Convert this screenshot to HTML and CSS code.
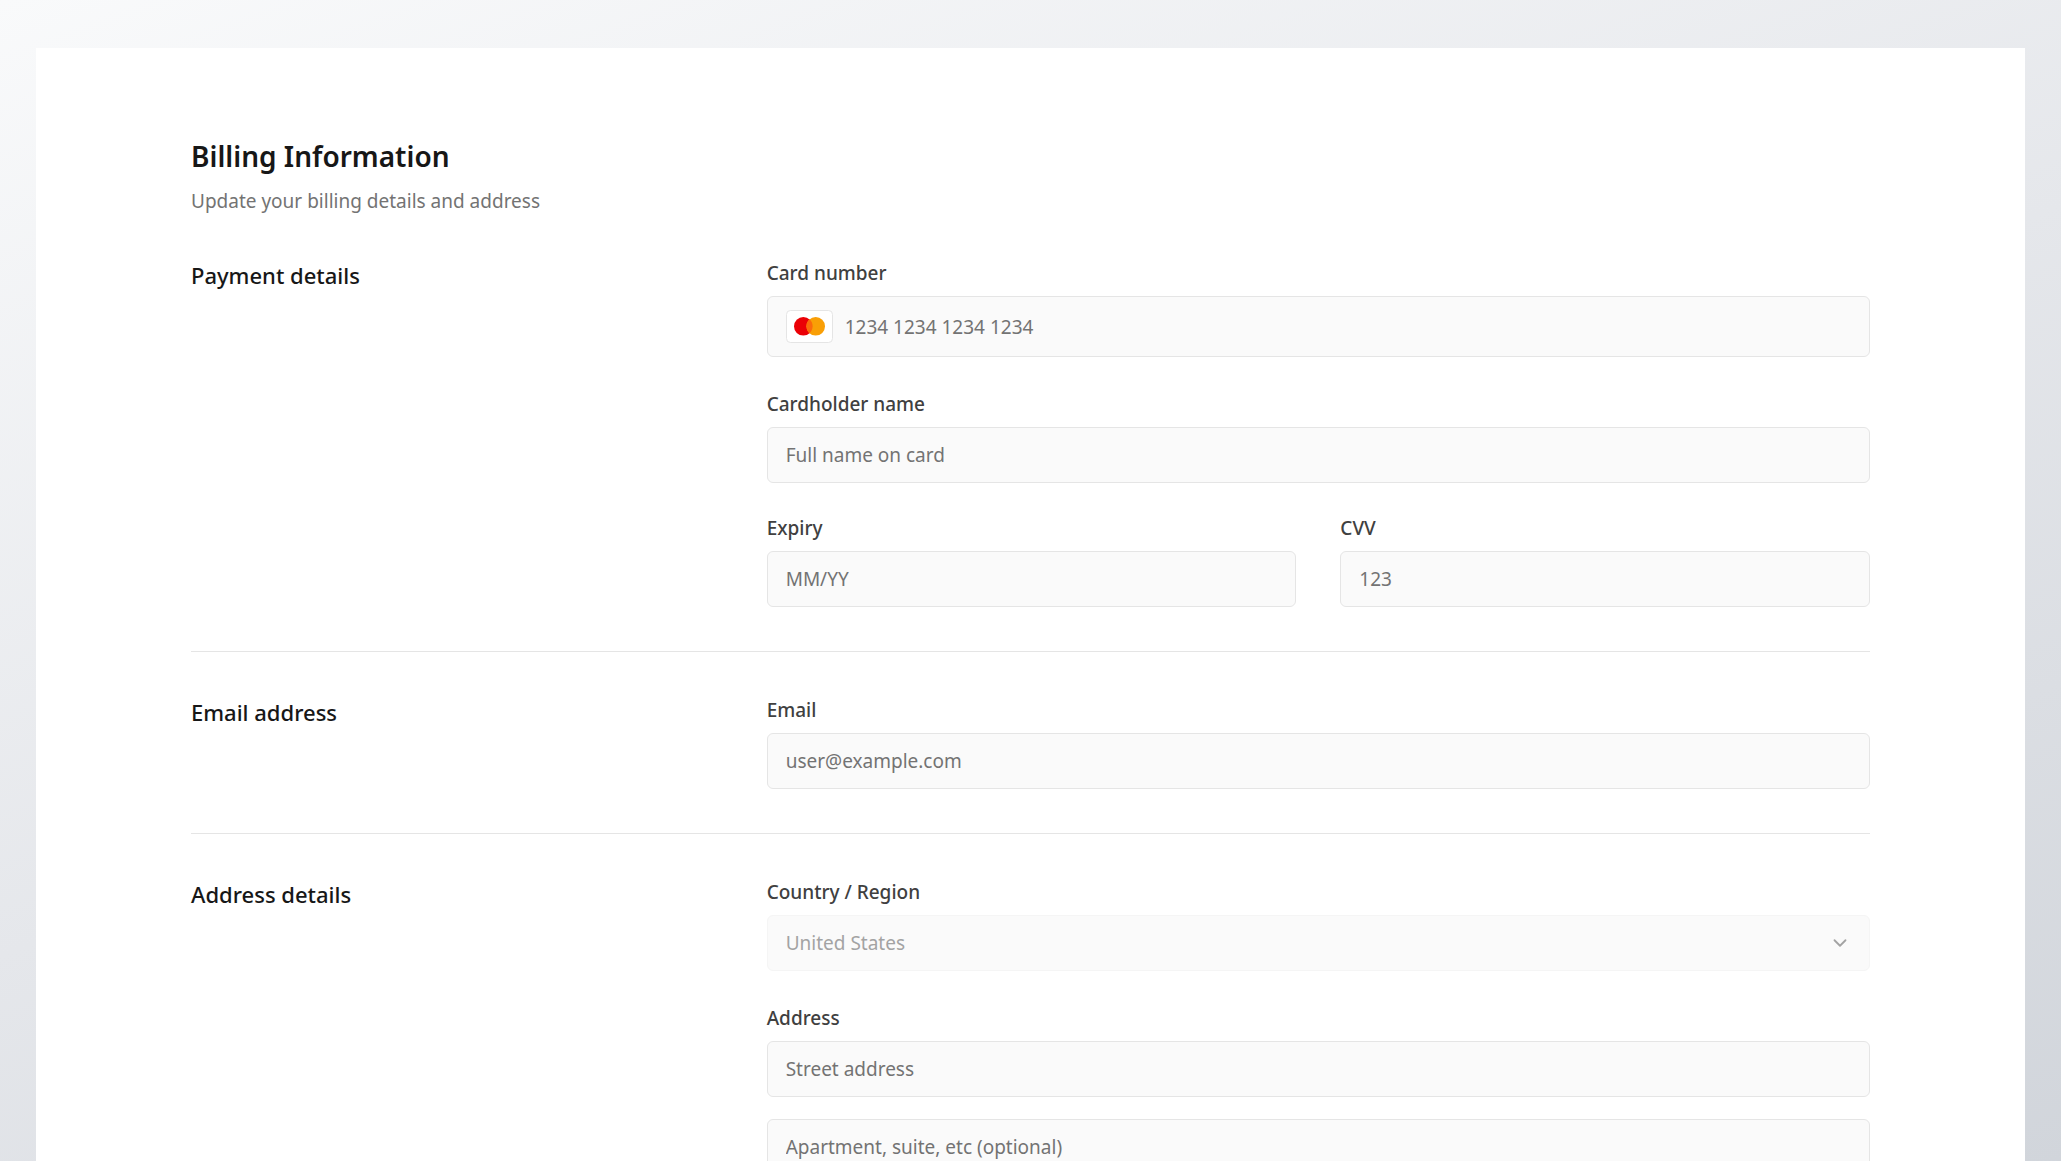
FILE: index.html
```html
<!DOCTYPE html>
<html lang="en">
<head>
<meta charset="utf-8">
<meta name="viewport" content="width=device-width, initial-scale=1">
<title>Billing Information</title>
<link rel="stylesheet" href="styles.css">
</head>
<body>
<main class="panel">
  <header class="panel-header">
    <h1 class="title">Billing Information</h1>
    <p class="subtitle">Update your billing details and address</p>
  </header>
  <form class="billing-form">
    <section class="section">
      <h2 class="section-title">Payment details</h2>
      <div class="fields">
        <div class="field">
          <label class="label" for="card-number">Card number</label>
          <div class="control card-control">
            <svg class="card-brand" viewBox="0 0 47 33" aria-hidden="true">
              <rect x="0.5" y="0.5" width="46" height="32" rx="4" fill="#fff" stroke="#e5e5e5"/>
              <circle cx="17.3" cy="16.3" r="9.3" fill="#eb0006"/>
              <circle cx="29.7" cy="16.3" r="9.3" fill="#f99f06"/>
              <path d="M23.5 9.37a9.3 9.3 0 0 1 0 13.86a9.3 9.3 0 0 1 0-13.86z" fill="#fb6a0c"/>
            </svg>
            <input class="card-input" id="card-number" type="text" placeholder="1234 1234 1234 1234">
          </div>
        </div>
        <div class="field">
          <label class="label" for="cardholder">Cardholder name</label>
          <input class="control" id="cardholder" type="text" placeholder="Full name on card">
        </div>
        <div class="field-row">
          <div class="field">
            <label class="label" for="expiry">Expiry</label>
            <input class="control" id="expiry" type="text" placeholder="MM/YY">
          </div>
          <div class="field">
            <label class="label" for="cvv">CVV</label>
            <input class="control" id="cvv" type="text" placeholder="123">
          </div>
        </div>
      </div>
    </section>
    <section class="section">
      <h2 class="section-title">Email address</h2>
      <div class="fields">
        <div class="field">
          <label class="label" for="email">Email</label>
          <input class="control" id="email" type="email" placeholder="user@example.com">
        </div>
      </div>
    </section>
    <section class="section">
      <h2 class="section-title">Address details</h2>
      <div class="fields">
        <div class="field">
          <label class="label" for="country">Country / Region</label>
          <div class="select-wrap">
            <select class="control select" id="country" disabled>
              <option>United States</option>
            </select>
            <svg class="chevron" viewBox="0 0 24 24" aria-hidden="true"><path d="m6 9 6 6 6-6"/></svg>
          </div>
        </div>
        <div class="field">
          <label class="label" for="street">Address</label>
          <div class="stack">
            <input class="control" id="street" type="text" placeholder="Street address">
            <input class="control" id="unit" type="text" aria-label="Apartment" placeholder="Apartment, suite, etc (optional)">
          </div>
        </div>
      </div>
    </section>
  </form>
</main>
</body>
</html>
```
FILE: styles.css
```css
* {
  box-sizing: border-box;
}

html {
  scrollbar-width: none;
}

body {
  min-height: 100vh;
  margin: 0;
  padding: 48px 36px;
  background: linear-gradient(160deg, #f9fafb, #e5e7eb 50%, #d1d5db) fixed;
  color: #171717;
  font-family: "Noto Sans", sans-serif;
  font-size: 19px;
  line-height: 28px;
}

.panel {
  padding: 88px 155px;
  background: #fff;
}

.panel-header {
  margin-bottom: 44px;
}

.title {
  margin: 0 0 11px;
  font-size: 28px;
  font-weight: 600;
  line-height: 40px;
}

.subtitle {
  margin: 0;
  color: #737373;
}

.section {
  display: grid;
  grid-template-columns: repeat(3, 1fr);
  column-gap: 48px;
}

.section + .section {
  margin-top: 44px;
  padding-top: 44px;
  border-top: 1px solid #e5e5e5;
}

.section-title {
  margin: 0;
  font-size: 22px;
  font-weight: 500;
  line-height: 32px;
}

.fields {
  grid-column: span 2;
  display: flex;
  flex-direction: column;
  gap: 33px;
}

.field {
  display: flex;
  flex-direction: column;
  gap: 9px;
}

.field-row {
  display: grid;
  grid-template-columns: 1fr 1fr;
  gap: 44px;
  margin-top: -2px;
}

.label {
  color: #404040;
  font-weight: 500;
}

.control {
  width: 100%;
  height: 56px;
  padding: 0 18px;
  border: 1px solid #e5e5e5;
  border-radius: 6px;
  background: #fafafa;
  color: #171717;
  font: inherit;
}

.control::placeholder,
.card-input::placeholder {
  color: #737373;
  opacity: 1;
}

.card-control {
  display: flex;
  align-items: center;
  gap: 12px;
  height: 61px;
}

.card-brand {
  flex: none;
  width: 47px;
  height: 33px;
}

.card-input {
  flex: 1;
  min-width: 0;
  padding: 0;
  border: 0;
  background: none;
  color: #171717;
  font: inherit;
}

.select-wrap {
  display: grid;
  align-items: center;
}

.select-wrap > * {
  grid-area: 1 / 1;
}

.select {
  appearance: none;
  border-color: #f5f5f5;
  color: #a3a3a3;
  opacity: 1;
}

.chevron {
  justify-self: end;
  width: 22px;
  height: 22px;
  margin-right: 19px;
  fill: none;
  stroke: #a3a3a3;
  stroke-width: 2;
  stroke-linecap: round;
  stroke-linejoin: round;
  pointer-events: none;
}

.stack {
  display: flex;
  flex-direction: column;
  gap: 22px;
}
```
